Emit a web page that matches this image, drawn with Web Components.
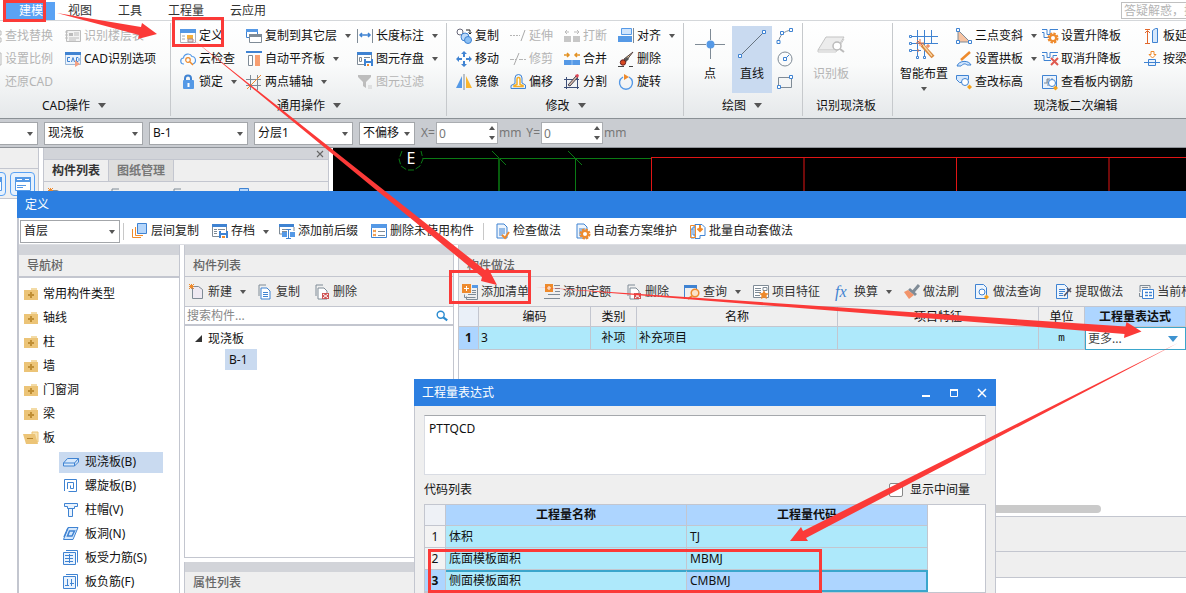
<!DOCTYPE html>
<html lang="zh-CN">
<head>
<meta charset="utf-8">
<title>定义</title>
<style>
html,body{margin:0;height:100%;overflow:hidden;background:#fff}
body{font:12px/16px "Noto Sans","Noto Sans CJK SC",sans-serif;color:#111;
 --line:#c3c6cf;--strip:#d2d4d9;--panel:#efefef;--blue:#2c7fe1;--sel:#c9daf0;--cyan:#aee9fb;--head:#add5ff}
</style>
</head>
<body>
<app-shell></app-shell>
<script>
const B='#3f83d2',L='#5599e6',O='#ee8a2c',G='#7f8b96',Y='#ecc477';
const folder=`<path d="M8 2h6v2H8z" fill="#f3dba6"/><path d="M1 4h14v10H1z" fill="${Y}"/>`;
const doc=`<path d="M3 1h7l3 3v11H3z" fill="#eef5fd" stroke="${B}"/><path d="M5 6h6M5 8h6M5 10h6M5 12h4" stroke="${B}"/>`;
const copyDoc=c=>`<path d="M2 12V1h7" fill="none" stroke="${G}"/><path d="M4 4h6l3 3v8H4z" fill="#fff" stroke="${c}"/>`;
const gear=(x,y)=>`<circle cx="${x}" cy="${y}" r="4.5" fill="none" stroke="${O}" stroke-width="2" stroke-dasharray="2.4 1.1"/><circle cx="${x}" cy="${y}" r="3" fill="#fff" stroke="${O}" stroke-width="2"/>`;
const node=(x,y)=>`<path d="M${x-1.5} ${y-1.5}h3v3h-3z" fill="#fff" stroke="${B}"/>`;
const ICONS={
find:`<path d="M2 3h13v4H2zM2 10h13v4H2z" fill="none" stroke="#b9b9b9"/>`,
scale:`<path d="M2 2h13v12H2z" fill="none" stroke="#b9b9b9"/>`,
restore:`<path d="M9 2l-6 6 6 6" fill="none" stroke="#c4c4c4"/>`,
floors:`<path d="M1.500 2.500h14v11h-14z" fill="#f3f3f3" stroke="#bdbdbd"/><path d="M0 4h3M0 7h3M0 10h3" stroke="#bdbdbd"/><path d="M4 5h4v3H4z" fill="#bbb"/><path d="M9 5h5M9 7h5M4 10h10M4 12h7" stroke="#bbb"/>`,
cad:`<path d="M.5 1.500h15v12H.5z" fill="#eaf3fd" stroke="#9bb8d8"/><path d="M0 1h16v3H0z" fill="${B}"/><path d="M5 6.500H2.500v4H5M6.500 11L8 6.500 9.500 11M11.500 6.500v4H13l1-1v-2l-1-1z" fill="none" stroke="${B}"/><path d="M10 9l5 4-5 3z" fill="#f3a184"/>`,
define:`<path d="M.5 1.500h15v13H.5z" fill="#fff" stroke="#aab4bf"/><path d="M0 1h16v4H0z" fill="${L}"/><path d="M2 8h3M2 11h3" stroke="#aaa"/><path d="M7 7h6v4H7z" fill="#f7b13c"/><path d="M8 11h5v3H8z" fill="#ddd" stroke="#a88"/>`,
cloud:`<path d="M4 13a3 3 0 0 1-.5-6A4.500 4.500 0 0 1 12 5.500 3.800 3.800 0 0 1 12.500 13" fill="none" stroke="${L}" stroke-width="1.200"/><circle cx="8" cy="9" r="2.300" fill="none" stroke="${O}" stroke-width="1.200"/><path d="M10 11l3 3" stroke="${O}" stroke-width="1.500"/>`,
lock:`<path d="M5 7V4.500a3 3 0 0 1 6 0V7" fill="none" stroke="${B}" stroke-width="2"/><rect x="3" y="6" width="11" height="9" rx="1" fill="${L}"/><path d="M8.500 9v4" stroke="#fff" stroke-width="2"/>`,
copyfloor:`<path d="M.5 1.500h11v8H.5z" fill="#fff" stroke="${B}"/><path d="M0 1h12v3H0z" fill="${L}"/><path d="M3.500 6.500h12v8h-12z" fill="#fff" stroke="${G}"/><path d="M3 6h13v3H3z" fill="${G}"/>`,
align:`<path d="M0 1h16" stroke="${B}" stroke-width="2"/><path d="M2.500 4.500h4v10h-4z" fill="#fff" stroke="${G}"/><path d="M9 4h5v11H9z" fill="#f79e71"/>`,
axis:`<path d="M0 5.500h15M0 11.500h15M4.500 1v15M11.500 1v15" stroke="${G}"/><path d="M1 15L15 1" stroke="${O}"/>`,
length:`<path d="M.5 1v14M15.500 1v14" stroke="${G}"/><path d="M3 7h10M5 5L3 7l2 2M11 5l2 2-2 2" fill="none" stroke="${B}" stroke-width="1.500"/>`,
save:`<path d="M.5 1.500h14v12H.5z" fill="#fff" stroke="${G}"/><path d="M0 1h15v3H0z" fill="${B}"/><path d="M2.500 6.500h2v4h-2zM7 6.500h6" fill="none" stroke="${G}"/><path d="M7 8h9v7H7z" fill="${B}"/><path d="M9 8h5v2H9z" fill="#fff"/><path d="M9 12h5v3H9z" fill="#fff"/><path d="M10 13h2v2h-2z" fill="${O}"/>`,
archive:`<path d="M.5 1.500h14v12H.5z" fill="#fff" stroke="${G}"/><path d="M0 1h15v3H0z" fill="${B}"/><path d="M2 6.500h3M6 6.500h7M2 8.500h3M2 10.500h3" fill="none" stroke="${G}"/><path d="M7 8h9v7H7z" fill="${B}"/><path d="M9 8h5v2H9z" fill="#fff"/><path d="M9 12h5v3H9z" fill="#fff"/><path d="M10 13h3v2h-3z" fill="${O}"/>`,
funnel:`<path d="M1 1h13v2L9 8v6l-3-2V8L1 3z" fill="#bdbdbd"/><path d="M11 12h4M11 14h4" stroke="#ccc"/>`,
copy:`<circle cx="4" cy="4" r="3" fill="#fff" stroke="#667"/><circle cx="9" cy="9" r="4" fill="#bcd9f8" stroke="${B}"/><circle cx="12" cy="12" r="3.500" fill="#8cc0f4" stroke="${B}"/><path d="M10 2h4v4M12.500 4.500L14 6l1.500-1.500" fill="none" stroke="#222"/>`,
move:`<path d="M8 0l3 3H5zM8 16l3-3H5zM0 8l3-3v6zM16 8l-3-3v6z" fill="${B}"/><path d="M8 3v3M8 10v3M3 8h3M10 8h3" stroke="${B}" stroke-width="2"/>`,
mirror:`<path d="M6 2v12H0z" fill="${L}"/><path d="M10 2v12h6z" fill="#fbb62c"/><path d="M8 0v16" stroke="${G}"/>`,
extend:`<path d="M0 7.500h10" stroke="#b5b5b5" stroke-dasharray="2 1"/><path d="M15 2l-4 11" stroke="#aaa"/>`,
trim:`<path d="M0 8.500h6M9 8.500h7" stroke="#b5b5b5" stroke-dasharray="4 1"/><path d="M9 2L4 14" stroke="#aaa"/>`,
offset:`<path d="M1 14.500v-3l4-2V4a3.500 3.500 0 0 1 7 0v5l3.500 2v3.500z" fill="#e8f2fe" stroke="${B}"/><path d="M4 12.500v-1l3-1V5a1.500 1.500 0 0 1 3 0v5.500l3 1v1z" fill="#fff" stroke="#f5ae25" stroke-width="1.500"/>`,
brk:`<path d="M0 8h7v6H0zM9 8h7v6H9z" fill="#c7c7c7"/><path d="M1 4h4M3 2L1 4l2 2M10 4h4M13 2l2 2-2 2" fill="none" stroke="#bbb"/>`,
merge:`<path d="M0 9h16v5H0z" fill="${L}"/><path d="M8 9v5" stroke="#9cc6f5"/><path d="M0 4h5M3 2l2 2-2 2M16 4h-5M13 2l-2 2 2 2" fill="none" stroke="#e39224" stroke-width="1.500"/>`,
split:`<path d="M0 5.500h15M0 13.500h15M2.500 3v12M13.500 3v12" stroke="#3d4f78"/><path d="M4 11L12 2l2 1-8 9z" fill="#d8b9a6" stroke="#445"/><path d="M11 1l3-1 1 2-2 2z" fill="#d45"/>`,
alignr:`<path d="M3.500.5h10v6h-10z" fill="#cfe4fc" stroke="${L}"/><path d="M0 8h14v6H0z" fill="${L}"/><path d="M15.500 0v15" stroke="${G}"/>`,
brush:`<path d="M15 1L8 10 6 8z" fill="#e7cfa0" stroke="#544"/><path d="M9 6l2 2-4 4-3-2z" fill="#555"/><circle cx="5" cy="11.500" r="2.700" fill="#d9481f" stroke="#622"/><path d="M0 15.500h6M11 15.500h4" stroke="#444"/>`,
rotate:`<path d="M5 3a6.500 6.500 0 1 0 6 0" fill="none" stroke="${L}" stroke-width="1.400"/><path d="M6 0l5 3-5 3z" fill="${O}"/>`,
point:['0 0 30 30',`<path d="M0 15.500h11M19 15.500h11M15.500 0v11M15.500 19v11" stroke="${G}"/><circle cx="15.500" cy="15.500" r="4" fill="${L}"/>`],
line:['0 0 30 30',`<path d="M3 27L27 3" stroke="#667380"/><path d="M1.500 25.500h3v3h-3zM25.500 1.500h3v3h-3z" fill="#fff" stroke="${B}"/>`],
arc:`<path d="M1.500 13.500C3 7 7 3 14.500 2" fill="none" stroke="${G}"/>${node(1.5,14)}${node(5,5)}${node(14,2)}`,
circ:`<circle cx="8" cy="8" r="7" fill="none" stroke="${G}"/><path d="M8 8l4-4" stroke="${B}"/>${node(8,8)}`,
rect:`<path d="M1.500 3.500h13v10h-13z" fill="none" stroke="${G}"/>${node(2,13)}${node(14,3)}`,
slab:['0 0 30 30',`<path d="M10 8h18l-8 13H2z" fill="#ececec" stroke="#c3c3c3"/><path d="M2 21v2h18l8-13" fill="none" stroke="#c9c9c9"/><circle cx="21" cy="17" r="4" fill="#fff" stroke="#bbb" stroke-width="1.500"/><path d="M24 20l4 3" stroke="#bbb" stroke-width="2"/>`],
smart:['0 0 30 30',`<path d="M2 7.500h27M2 14.500h27M2 21.500h10M8.500 1v27M15.500 1v27M22.500 1v14" stroke="${B}"/><path d="M.5 6.500h2v2h-2zM.5 13.500h2v2h-2zM.5 20.500h2v2h-2zM7.500 27.500h2v2h-2zM14.500 27.500h2v2h-2z" fill="#fff" stroke="${B}"/><path d="M13 16l11 12" stroke="#d8893f" stroke-width="4"/><path d="M14 16l9 11" stroke="#fbd9a9" stroke-width="1.200"/><path d="M11 10v7M7 14h8M8 11l6 6M19 15v4M17 17h4M9 20v3" stroke="#e8703a"/>`],
slope:`<path d="M2 2v12h12z" fill="#f7c4a3" stroke="${G}"/>${node(2,2)}${node(2,14)}${node(14,14)}`,
arch:`<path d="M1 15c2-6 12-6 14-1h-4c-2-2-4-1-6 1z" fill="#cfe4fc" stroke="${B}"/><path d="M14 1L5 9" stroke="${O}" stroke-width="2.500"/>`,
elev:`<path d="M.5 1.500h12v4l-3 3h-6l-3-3z" fill="#d6e8fc" stroke="${B}"/><circle cx="9" cy="8" r="3.500" fill="#fff" stroke="${B}"/><path d="M11 13l2.500-2.500L16 13l-2.500 2.500z" fill="#f5a21b"/>`,
lift:`<path d="M0 1.500h5v5h3v-5h8M0 4.500h2v5h6" fill="none" stroke="${B}"/>${gear(11,10)}`,
unlift:`<path d="M0 1.500h5v5h3v-5h8M0 4.500h2v5h7M11 7V4.500h4" fill="none" stroke="${B}"/><path d="M9 7l7 7M16 7l-7 7" stroke="#df5a50" stroke-width="2"/>`,
viewbar:`<path d="M.5 1.500h14v13H.5z" fill="#eaf3fd" stroke="${B}"/><path d="M2 9h3V5h3M6 12V5M10 4v3" fill="none" stroke="${G}"/><circle cx="10" cy="9" r="3.500" fill="#fff" stroke="${B}"/><path d="M11 14l2.500-2.500L16 14l-2.500 2.500z" fill="#f5a21b"/>`,
extslab:`<path d="M3.500 15V3M1 5l2.500-2.500L6 5M1 15.500h5M1 1.500h5" fill="none" stroke="#e2672b"/><path d="M8.500 2.500l3-2h2v14h-5z" fill="#d6e8fc" stroke="${B}"/>`,
bybeam:`<path d="M0 11.500h16M4.500 8.500h7v6h-7z" fill="#eaf3fd" stroke="${B}"/><path d="M7 .5h3v3h2L8.500 7 5 3.500h2z" fill="#fff" stroke="${O}"/>`,
floorcopy:`<path d="M5.500.5h9v10h-9z" fill="#b5d6fb" stroke="${B}"/><path d="M3.500 4v8.500H11M.5 6v8.500H9" fill="none" stroke="${O}"/>`,
prefix:`<path d="M0 1h15v3H0z" fill="${B}"/><path d="M.5 4v7h4M15 4v4M3 6.500h9M3 8.500h5" fill="none" stroke="${G}"/><path d="M3 9h5v5H3zM11 9h5v5h-5z" fill="${L}"/><path d="M7 6.500h5M9.500 6v10M7 15.500h5" stroke="${B}"/>`,
unused:`<path d="M.5 2.500h15v12H.5z" fill="#fff" stroke="${B}"/><path d="M0 1h16v4H0z" fill="${L}"/><path d="M2 7l3 2M5 7L2 9M2 11l3 2M5 11l-3 2" stroke="${O}"/><path d="M7 8.500h7M7 12.500h7" stroke="${G}"/>`,
check:doc+`<path d="M8 12l3 3 4-6" fill="none" stroke="${O}" stroke-width="2"/>`,
auto:doc+gear(11,11),
batch:`<path d="M5 1.500h7l3 3v8h-5v3H5zM5 4H3v8h2M3 6H1v9h3" fill="#fff" stroke="${B}"/><path d="M.5 2.500h5v12h-5z" fill="none" stroke="${O}"/><path d="M10 2v6M7.500 5.500L10 8l2.500-2.500" fill="none" stroke="${O}" stroke-width="2"/>`,
newdoc:`<path d="M3.500 2.500h6l4 3v9h-10z" fill="#eee9f2" stroke="${G}"/><path d="M0 0l5 5M5 0L0 5M2.500 0v5M0 2.500h5" stroke="${O}"/>`,
copydoc:copyDoc(B)+`<path d="M6 8.500h5M6 10.500h5M6 12.500h5" stroke="${B}"/>`,
deldoc:copyDoc(G)+`<path d="M8 9h7v6H8z" fill="#cf5454"/><path d="M9 10l5 4M14 10l-5 4" stroke="#fff"/>`,
addlist:`<path d="M0 0h9v9H0z" fill="${O}"/><path d="M2 4.500h5M4.500 2v5" stroke="#fff"/><path d="M10 1h6v3h-6z" fill="${L}"/><path d="M15.500 4v11.500h-11v-3M13.500 13.500h-11v-3M10 6.500h4M10 8.500h4M6 10.500h8" fill="none" stroke="${G}"/>`,
addquota:`<path d="M1 0h8v8H1z" fill="${O}"/><path d="M3 4h4M5 2v4" stroke="#fff"/><path d="M10 1.500h6M11 4.500h5M11 7.500h5M4 10.500h12M0 14.500h16" stroke="${G}"/>`,
query:`<path d="M.5 15V1.500h12V6" fill="none" stroke="${B}"/><path d="M0 1h13v3H0z" fill="${B}"/><circle cx="11" cy="9" r="3.800" fill="#fbe3c9" stroke="${O}" stroke-width="1.500"/><path d="M8 12l-4 3" stroke="${O}" stroke-width="2"/>`,
feature:`<path d="M.5 1.500h15v12H.5z" fill="#fff" stroke="${G}"/><path d="M2 4.500h6M2 6.500h6M2 8.500h6M2 11.500h5M10 3.500h4v3h-4z" fill="none" stroke="${G}"/><path d="M11 6l1.500 3 3.500.5-2.500 2 .5 3.500-3-1.500L8 15l.5-3.500L6 9.500 9.500 9z" fill="${O}"/>`,
fx:`<text x="0" y="13" font-family="Liberation Serif,serif" font-style="italic" font-size="16" fill="${B}">fx</text>`,
painter:`<path d="M15 1l-6 7" stroke="${G}" stroke-width="3"/><path d="M6 4l7 6-2 2-7-6z" fill="${G}"/><path d="M4 6l6 5-5 4-5-7z" fill="#f2946a"/>`,
methodq:`<path d="M1.500.5h8l3 3v11h-11z" fill="#eef5fd" stroke="${B}"/><circle cx="8" cy="8" r="3" fill="#fff" stroke="${B}"/><path d="M10 13l2.500-2.500L15 13l-2.500 2.500z" fill="#f5a21b"/>`,
extract:`<path d="M.5.5h8l3 3v11H.5z" fill="#eef5fd" stroke="${B}"/><path d="M3 5.500h6M3 7.500h6M3 9.500h4M3 11.500h4" stroke="${B}"/><path d="M15 4l-7 8M11 4l4 4" stroke="#556" stroke-width="1.600"/>`,
current:`<path d="M2 8V1.500h10v3M4 3.500h6M1.500 9v3.500h3" fill="none" stroke="${G}"/><path d="M4.500 5.500h11v9h-11z" fill="#fff" stroke="${B}"/><path d="M7 8.500h3M11 8.500h3M7 11.500h3M11 11.500h3" stroke="${B}" stroke-width="1.500"/>`,
fplus:folder+`<path d="M8 6v6M5 9h6" stroke="#c08f35" stroke-width="2"/>`,
fminus:`<path d="M9 2h6v10H9z" fill="#f7e2b2" stroke="${Y}"/><path d="M0 4h12l3 10H3z" fill="${Y}"/><path d="M4 8.500h6" stroke="#b8862f"/>`,
s1:`<path d="M.5 9l4-4.500h11l-4 4.500zM.5 9v3h11V9M11.500 12l4-4V4.500" fill="#d6e8fc" stroke="${B}"/>`,
s2:`<path d="M1.500 13V1.500h12v12h-8M4.500 11V4.500h6v6h-3v-3" fill="none" stroke="${B}"/>`,
s3:`<path d="M1.500 1.500h13v3h-3v2h-7v-2h-3zM5.500 6.500v8h4v-8" fill="#eaf3fd" stroke="${B}"/>`,
s4:`<path d="M5 1.500h10l-5 12H.5z" fill="#d6e8fc" stroke="${B}"/><path d="M6.500 5h5l-2.500 5H4.500zM5 2L1 11" fill="none" stroke="${B}" stroke-width="1.500"/>`,
s5:`<path d="M3 .5h11.500v12" fill="none" stroke="${B}"/><path d="M.5 2.500h12v12H.5z" fill="#eaf3fd" stroke="${B}"/><path d="M2 5.500h8M2 8.500h8M2 11.500h8M6.500 4v9" stroke="${B}"/>`,
s6:`<path d="M3 .5h11.500v12" fill="none" stroke="${B}"/><path d="M.5 2.500h12v12H.5z" fill="#eaf3fd" stroke="${B}"/><path d="M2 11.500h4M7 9.500h4M4.500 5v7M8.500 5v7" stroke="${B}"/>`,
search:`<circle cx="6.500" cy="6.500" r="4" fill="none" stroke="#2a8bd0" stroke-width="1.600"/><path d="M9.500 9.500L14 13" stroke="#2a8bd0" stroke-width="2.400"/>`,
card:`<path d="M.5 1.500h15v13H.5z" fill="#fff" stroke="${L}"/><path d="M0 1h16v5H0z" fill="${L}"/><path d="M2 3.500h5M10 3.500h4" stroke="#fff"/><path d="M2 9.500h9M2 11.500h6" stroke="${L}"/>`,
min:`<path d="M4 11h8" stroke="#fff" stroke-width="2"/>`,
max:`<path d="M4.500 5h7v6.500h-7z" fill="none" stroke="#fff"/><path d="M4 5h8" stroke="#fff" stroke-width="2"/>`,
close:`<path d="M4 4l8 8M12 4l-8 8" stroke="currentColor" stroke-width="1.500"/>`
};
/* Base: fills an open shadow root from the class's own css and view(). */
class View extends HTMLElement{
 static css='';
 connectedCallback(){
  if(this.shadowRoot)return;
  const t=document.createElement('template');
  t.innerHTML=`<style>*{box-sizing:border-box}:host{display:block;box-sizing:border-box}button,input,select,textarea{font:inherit;color:inherit;margin:0}button{background:none;border:0;padding:0;cursor:default;white-space:nowrap}${this.constructor.css}</style>${this.view()}`;
  this.attachShadow({mode:'open'}).append(t.content.cloneNode(true));
 }
 a(n,d=''){return this.getAttribute(n)??d}
 view(){return '<slot></slot>'}
}
const def=(n,c)=>customElements.define(n,c);

def('app-icon',class extends View{
 static css=':host{flex:none;width:16px;height:16px}:host([big]){width:30px;height:30px}svg{display:block;width:100%;height:100%;overflow:visible}';
 view(){const i=ICONS[this.a('name')];const[v,p]=Array.isArray(i)?i:['0 0 16 16',i];return `<svg viewBox="${v}" aria-hidden="true">${p}</svg>`}
});
def('tool-button',class extends View{
 static css=`:host([off]){color:#b4b4b4}button{display:flex;align-items:center;gap:3px;height:23px}
 i{flex:none;border:3px solid transparent;border-top:4px solid #555;border-bottom:0;margin:1px -3px 0 5px}
 :host([wide]) button{padding:0 var(--pad,7px);height:26px}
 :host([big]) button{flex-direction:column;gap:7px;height:67px;padding:3px 5px 0}
 :host([big]) i{margin:-2px 0 0}
 :host([pressed]) button{background:var(--sel)}`;
 view(){return `<button type="button" ${this.hasAttribute('off')?'aria-disabled="true"':''} ${this.hasAttribute('tip')?`aria-label="${this.a('tip')}"`:''}>${this.a('icon')?`<app-icon name="${this.a('icon')}" ${this.hasAttribute('big')?'big':''}></app-icon>`:''}<slot></slot>${this.hasAttribute('menu')?'<i></i>':''}</button>`}
});
def('ribbon-group',class extends View{
 static css=`:host{flex:none;display:flex;flex-direction:column;padding:3px 0 0 9px;position:relative}
 :host::after{content:"";position:absolute;right:0;top:2px;bottom:2px;width:1px;background:#c6c9cc}
 .tools{display:grid;grid-auto-flow:column;grid-template-rows:repeat(3,23px);grid-template-columns:var(--cols)}
 ::slotted([big]){grid-row:1/4;margin-top:2px}
 footer{display:flex;justify-content:center;align-items:center;height:26px;margin-left:-9px}
 footer i{border:4px solid transparent;border-top:5px solid #555;border-bottom:0;margin-left:8px}`;
 view(){return `<div class="tools"><slot></slot></div><footer>${this.a('label')}${this.hasAttribute('menu')?'<i></i>':''}</footer>`}
});
const tb=(icon,text,attrs='')=>`<tool-button icon="${icon}" ${attrs}>${text}</tool-button>`;
def('app-ribbon',class extends View{
 static css=`:host{overflow:hidden;height:98px;border-bottom:1px solid #8a9095;background:linear-gradient(#fff,#fafbfb 45%,#e5e8ea)}
 .row{display:flex;margin-left:-23px;height:97px}
 .g1{width:194px;--cols:79px auto}.g2{width:276px;--cols:66px 111px auto}.g3{width:237px;--cols:54px 54px 54px auto}
 .g4{width:119px;--cols:42px 45px auto}.g5{width:90px;--cols:auto}.g6{width:372px;--cols:61px 86px 102px auto}
 .g4 [big],.g5 [big],.g6 [big]{justify-self:start}.g4{padding-left:6px}.g5{padding-left:5px}.g6{padding-left:2px}`;
 view(){return `<div class="row">
<ribbon-group class="g1" label="CAD操作" menu>${tb('find','查找替换','off')}${tb('scale','设置比例','off')}${tb('restore','还原CAD','off')}${tb('floors','识别楼层表','off')}${tb('cad','CAD识别选项')}</ribbon-group>
<ribbon-group class="g2" label="通用操作" menu>${tb('define','定义')}${tb('cloud','云检查')}${tb('lock','锁定','menu')}${tb('copyfloor','复制到其它层','menu')}${tb('align','自动平齐板','menu')}${tb('axis','两点辅轴','menu')}${tb('length','长度标注','menu')}${tb('save','图元存盘','menu')}${tb('funnel','图元过滤','off')}</ribbon-group>
<ribbon-group class="g3" label="修改" menu>${tb('copy','复制')}${tb('move','移动')}${tb('mirror','镜像')}${tb('extend','延伸','off')}${tb('trim','修剪','off')}${tb('offset','偏移')}${tb('brk','打断','off')}${tb('merge','合并')}${tb('split','分割')}${tb('alignr','对齐','menu')}${tb('brush','删除')}${tb('rotate','旋转')}</ribbon-group>
<ribbon-group class="g4" label="绘图" menu>${tb('point','点','big')}${tb('line','直线','big pressed')}${tb('arc','','tip="圆弧"')}${tb('circ','','tip="圆"')}${tb('rect','','tip="矩形"')}</ribbon-group>
<ribbon-group class="g5" label="识别现浇板">${tb('slab','识别板','big off')}</ribbon-group>
<ribbon-group class="g6" label="现浇板二次编辑">${tb('smart','智能布置','big menu')}${tb('slope','三点变斜','menu')}${tb('arch','设置拱板','menu')}${tb('elev','查改标高')}${tb('lift','设置升降板')}${tb('unlift','取消升降板')}${tb('viewbar','查看板内钢筋')}${tb('extslab','板延')}${tb('bybeam','按梁')}</ribbon-group></div>`}
});
def('app-tabs',class extends View{
 static css=`:host{display:flex;height:21px;border-bottom:1px solid #d4d7da;background:#fff;color:#333}
 nav{display:flex;margin-left:4px;padding-top:2px}nav button{padding:0 13px;height:18px}
 nav button.on{background:#5aa2f4;color:#fff;padding:0 12px 0 15px}
 input{margin:2px 0 0 auto;width:65px;height:17px;border:1px solid #c0c0c0;border-right:0;padding:0 0 0 2px;background:#fff;outline:0}input::placeholder{color:#b4b4b4;opacity:1}`;
 view(){return `<nav><button class="on">建模</button><button>视图</button><button>工具</button><button>工程量</button><button>云应用</button></nav><input type="text" aria-label="搜索" placeholder="答疑解惑，搜">`}
});
def('combo-box',class extends View{
 static css=`:host{position:relative;flex:none;background:#fff;border:1px solid #a3a6aa;height:23px}
 select{appearance:none;width:100%;height:100%;border:0;background:none;padding:0 0 0 3px;outline:0;display:block}
 i{position:absolute;right:4px;top:9px;border:3px solid transparent;border-top:4px solid #555;border-bottom:0;pointer-events:none}`;
 view(){return `<select aria-label="${this.a('label')}"><option>${this.a('value')}</option></select><i></i>`}
});
def('spin-box',class extends View{
 static css=`:host{display:flex;align-items:center;color:#777}div{position:relative;width:62px;height:22px;margin:0 1px}
 input{appearance:textfield;width:100%;height:100%;border:1px solid #aaadb1;padding:0 2px;background:#fff;outline:0;display:block}
 input::-webkit-inner-spin-button{display:none}
 svg{position:absolute;right:3px;top:4px}`;
 view(){return `<label for="n">${this.a('label')}=</label><div><input id="n" type="number" value="0"><svg width="6" height="14"><path d="M3 0l3 4H0zM3 14l3-4H0z" fill="#555"/></svg></div>mm`}
});
def('option-bar',class extends View{
 static css=`:host{display:flex;align-items:center;gap:6px;height:29px;background:#c9ccd1;border-bottom:1px solid #8f9399}
 .a{width:38px;border-left:0}.b{width:99px}.c{width:56px}spin-box+spin-box{margin-left:-1px}`;
 view(){return `<combo-box class="a" label="楼层" value=""></combo-box><combo-box class="b" label="类型" value="现浇板"></combo-box><combo-box class="b" label="构件" value="B-1"></combo-box><combo-box class="b" label="分层" value="分层1"></combo-box><combo-box class="c" label="偏移" value="不偏移"></combo-box><spin-box label="X"></spin-box><spin-box label="Y"></spin-box>`}
});
def('work-area',class extends View{
 static css=`:host{flex:1;display:flex;min-height:0;background:#fff}
 .side{width:39px;height:51px;background:var(--panel);border-right:1px solid var(--line);border-bottom:1px solid var(--line);overflow:hidden}
 .side div{height:21px;border-bottom:1px solid var(--line)}
 .side p{margin:3px 0 0 -19px;display:flex;gap:4px}
 .side button{flex:none;width:25px;height:24px;border:1px solid #5aa2f4;border-radius:4px;background:#e6f1fd;padding:3px 4px}
 .list{width:286px;margin-left:4px;background:var(--panel);border:solid var(--line);border-width:0 1px}
 .bar{height:12px;background:var(--strip);border-bottom:1px solid var(--line);display:flex;justify-content:flex-end;color:#666}
 .bar app-icon{width:12px;height:12px;margin-right:2px}
 .tabs{display:flex;height:22px;border-bottom:1px solid var(--line)}
 .tabs button{width:65px;border-right:1px solid var(--line);color:#777;background:#dedede;font-weight:bold}.tabs .on{background:var(--panel);color:#333}
 .tools{display:flex;padding:6px 4px;gap:46px}
 .cad{flex:1;margin-left:4px;background:#000;overflow:hidden;min-width:0}svg{display:block}`;
 view(){return `<div class="side"><div></div><p><button aria-label="列表"><app-icon name="card"></app-icon></button><button aria-label="属性"><app-icon name="card"></app-icon></button></p></div>
<div class="list"><div class="bar"><app-icon name="close"></app-icon></div><div class="tabs"><button class="on">构件列表</button><button>图纸管理</button></div><div class="tools"><app-icon name="newdoc"></app-icon><app-icon name="copydoc"></app-icon><app-icon name="deldoc"></app-icon><app-icon name="floorcopy"></app-icon></div></div>
<div class="cad"><svg width="1600" height="60" fill="none"><path d="M69 3l-3 8 2 7 6 4h7l6-4 3-7-2-8" stroke="#0a7a14" stroke-dasharray="6 2"/><path d="M90 10.500h229M159 3l14 14M235 3l14 14M242.500 10v50" stroke="#0a7a14"/><path d="M166 10v50" stroke="#075c0d" stroke-width="2"/><path d="M318.500 10V60M318 9.500H1600M471 10v50M623.500 10v50M776 10v50M928.500 10v50" stroke="#e01515"/><text x="78" y="16" text-anchor="middle" font-size="16" fill="#fff">E</text></svg></div>`}
});
def('dock-panel',class extends View{
 static css=`:host{display:flex;flex-direction:column;min-width:0;border-left:1px solid var(--line);background:#fff;overflow:hidden}
 .strip{flex:none;height:10px;background:var(--strip)}h2{flex:none;margin:0;font:inherit;font-weight:500;color:#666;height:22px;line-height:22px;padding-left:8px;background:var(--panel);border-bottom:1px solid var(--line)}`;
 view(){return `<div class="strip"></div><h2>${this.a('title-text')}</h2><slot></slot>`}
});
def('nav-tree',class extends View{
 static css=`:host{flex:1;padding-top:4px;border-top:1px solid var(--line)}ul{list-style:none;margin:0;padding:0}
 li{display:flex;align-items:center;gap:4px;height:24px;padding-left:4px}
 .sub{padding-left:40px}.sub span{display:flex;align-items:center;gap:6px;height:21px;padding:0 27px 0 4px}.on span{background:var(--sel)}`;
 view(){const f=['常用构件类型','轴线','柱','墙','门窗洞','梁'],s=['现浇板(B)','螺旋板(B)','柱帽(V)','板洞(N)','板受力筋(S)','板负筋(F)'];
 return `<ul>${f.map(t=>`<li><app-icon name="fplus"></app-icon>${t}</li>`).join('')}<li><app-icon name="fminus"></app-icon>板</li>${s.map((t,i)=>`<li class="sub ${i?'':'on'}"><span><app-icon name="s${i+1}"></app-icon>${t}</span></li>`).join('')}</ul>`}
});
def('component-list',class extends View{
 static css=`:host{flex:1}.tools{display:flex;align-items:center;height:30px;background:var(--panel);border-bottom:1px solid var(--line);margin-left:-3px;color:#333}
 .search{display:flex;align-items:center;height:19px;border-bottom:2px solid var(--line)}
 input{flex:1;min-width:0;border:0;padding:0 0 0 2px;background:none;outline:0}input::placeholder{color:#888;opacity:1}
 .search app-icon{width:14px;height:14px;margin-right:4px}
 .tree{padding-top:2px}.tree div{display:flex;align-items:center;gap:6px;height:21px;padding-left:10px}
 .tree svg{display:block}.tree span{margin-left:30px;height:21px;line-height:21px;padding:0 9px 0 4px;background:var(--sel)}`;
 view(){return `<div class="tools">${tb('newdoc','新建','wide menu')}${tb('copydoc','复制','wide')}${tb('deldoc','删除','wide')}</div>
<div class="search"><input type="text" aria-label="搜索构件" placeholder="搜索构件..."><app-icon name="search"></app-icon></div>
<div class="tree"><div><svg width="7" height="7"><path d="M7 0v7H0z" fill="#333"/></svg>现浇板</div><div><span>B-1</span></div></div>`}
});
def('method-panel',class extends View{
 static css=`:host{flex:1;display:flex;flex-direction:column;min-height:0}.tools{flex:none;display:flex;align-items:center;height:30px;background:var(--panel);border-bottom:1px solid var(--line);margin-left:-4px;gap:1px;color:#333}
 table{flex:none;width:100%;table-layout:fixed;border-collapse:separate;border-spacing:0}
 th,td{padding:0;border:solid var(--line);border-width:0 1px 1px 0;font-weight:normal;overflow:hidden;white-space:nowrap;text-align:center;line-height:16px}
 thead th{height:20px;background:var(--panel)}thead th:first-child{background:#eaf0f8}
 tbody th{height:23px;background:var(--head);font-weight:bold}td{background:var(--cyan);padding:0 2px}.l{text-align:left}
 thead .on{background:var(--head);font-weight:bold}.m{font-family:"Liberation Mono",monospace;font-size:11px}
 .edit{background:#fff;border:1px solid #3aa6cc;text-align:left}.edit div{display:flex;justify-content:space-between;align-items:center;padding-right:5px;color:#444}
 .edit i{border:5px solid transparent;border-top:6px solid #3e93d0;border-bottom:0}
 .bar{margin-top:auto;padding-bottom:3px}.bar i{display:block;height:8px;border-radius:4px;background:#cacaca;margin-right:85px}
 .b1,.b2{flex:none;background:var(--panel);border-top:1px solid var(--line);height:35px}.b2{height:27px;border-bottom:1px solid var(--line);margin-bottom:15px}`;
 view(){return `<div class="tools">${tb('addlist','添加清单','wide')}${tb('addquota','添加定额','wide')}${tb('deldoc','删除','wide')}${tb('query','查询','wide menu')}${tb('feature','项目特征','wide')}${tb('fx','换算','wide menu')}${tb('painter','做法刷','wide')}${tb('methodq','做法查询','wide')}${tb('extract','提取做法','wide')}${tb('current','当前构','wide')}</div>
<table><colgroup><col style="width:20px"><col style="width:112px"><col style="width:46px"><col style="width:201px"><col><col style="width:46px"><col style="width:101px"></colgroup>
<thead><tr><th></th><th>编码</th><th>类别</th><th>名称</th><th>项目特征</th><th>单位</th><th class="on">工程量表达式</th></tr></thead>
<tbody><tr><th>1</th><td class="l">3</td><td>补项</td><td class="l">补充项目</td><td></td><td class="m">m</td><td class="edit"><div>更多...<i></i></div></td></tr></tbody></table>
<div class="bar"><i></i></div><div class="b1"></div><div class="b2"></div>`}
});
def('title-bar',class extends View{
 static css=`:host{display:flex;align-items:center;height:27px;background:var(--blue);color:#fff;padding-left:8px}div{margin-left:auto;display:flex;gap:12px;padding-right:6px}button{width:16px;height:16px}`;
 view(){return `<slot></slot>${this.hasAttribute('controls')?`<div><button aria-label="最小化"><app-icon name="min"></app-icon></button><button aria-label="最大化"><app-icon name="max"></app-icon></button><button aria-label="关闭"><app-icon name="close"></app-icon></button></div>`:''}`}
});
def('define-window',class extends View{
 static css=`:host{position:absolute;left:17px;top:191px;right:0;bottom:0;display:flex;flex-direction:column;background:#fff}
 .in{flex:1;display:flex;flex-direction:column;min-height:0;border-left:2px solid var(--line)}
 .tools{flex:none;display:flex;align-items:center;gap:1px;height:27px;padding-left:1px;border-bottom:1px solid #dcdee3;color:#222;--pad:6px}
 .tools combo-box{width:100px;margin-right:1px}.sep{width:1px;height:17px;background:#c8c8c8;margin:0 1px}.sep.far{margin:0 3px 0 2px}
 main{flex:1;min-height:0;display:grid;grid-template-columns:161px 270px minmax(0,1fr);gap:4px}
 .nav{border-left:0;border-right:1px solid var(--line)}.mid{display:flex;flex-direction:column;gap:4px;min-height:0}
 .list{flex:1;border-bottom:1px solid var(--line);border-right:1px solid var(--line)}.prop{flex:none;height:31px}`;
 view(){return `<title-bar>定义</title-bar><div class="in"><div class="tools"><combo-box label="楼层" value="首层"></combo-box><span class="sep"></span>${tb('floorcopy','层间复制','wide')}${tb('archive','存档','wide menu')}${tb('prefix','添加前后缀','wide')}${tb('unused','删除未使用构件','wide')}<span class="sep far"></span>${tb('check','检查做法','wide')}${tb('auto','自动套方案维护','wide')}${tb('batch','批量自动套做法','wide')}</div>
<main><dock-panel class="nav" title-text="导航树"><nav-tree></nav-tree></dock-panel><div class="mid"><dock-panel class="list" title-text="构件列表"><component-list></component-list></dock-panel><dock-panel class="prop" title-text="属性列表"></dock-panel></div><dock-panel title-text="构件做法"><method-panel></method-panel></dock-panel></main></div>`}
});
def('expression-dialog',class extends View{
 static css=`:host{position:absolute;left:414px;top:379px;width:582px;background:var(--panel)}
 .in{padding:9px 9px 20px;border:1px solid var(--line);border-top:0}
 textarea{display:block;width:100%;height:60px;resize:none;border:1px solid #d9dce3;border-top-color:#a5a8ac;background:#fff;padding:5px 4px;outline:0;line-height:16px}
 .row{display:flex;justify-content:space-between;align-items:center;height:29px;padding-right:16px}
 .row label{display:flex;align-items:center;gap:7px}input{appearance:none;width:14px;height:14px;border:1px solid #888;border-radius:2px;background:#fff}
 .box{background:#fff;border:1px solid var(--line)}
 table{width:503px;table-layout:fixed;border-collapse:separate;border-spacing:0}
 th,td{padding:0;height:22px;border:solid var(--line);border-width:0 1px 1px 0;font-weight:normal;line-height:16px}
 thead th{height:21px;background:var(--head);font-weight:bold}thead th:first-child{background:#eef1f6}
 td{background:var(--cyan);padding-left:3px;text-align:left}tbody th{background:#f3f3f3}
 .on th{background:var(--head);font-weight:bold}.on td{border-top:2px solid #3aa6cc;border-bottom:2px solid #3aa6cc}.on td:last-child{background:var(--head);border-right:2px solid #3aa6cc}`;
 view(){const r=[['体积','TJ'],['底面模板面积','MBMJ'],['侧面模板面积','CMBMJ']];
 return `<title-bar controls>工程量表达式</title-bar><div class="in"><textarea aria-label="表达式">PTTQCD</textarea><div class="row"><span>代码列表</span><label><input type="checkbox">显示中间量</label></div>
<div class="box"><table><colgroup><col style="width:21px"><col><col></colgroup><thead><tr><th></th><th>工程量名称</th><th>工程量代码</th></tr></thead><tbody>${r.map((x,i)=>`<tr class="${i==2?'on':''}"><th>${i+1}</th><td>${x[0]}</td><td>${x[1]}</td></tr>`).join('')}</tbody></table></div></div>`}
});
def('mark-layer',class extends View{
 static css=':host{position:absolute;inset:0;pointer-events:none;overflow:hidden}svg{display:block}';
 view(){return `<svg width="1186" height="593" fill="#fb3a38"><g fill="none" stroke="#fb3a38" stroke-width="3"><path d="M4.500 1.500h40v19h-40zM173.500 18.500h49v27h-49zM450.500 271.500h79v31h-79zM429.500 550.500h391v41h-391z"/></g>
<path d="M57 13l84 14 1-4 15 11-19 5 1-4z"/><path d="M190 37L485 270l3-2 9 17-16-4 1-4z"/><path d="M535 287l590.500 39.500 1-4.500 15 9.500-17.500 6.500.5-4z"/><path d="M1178 343L806 538l2 3-18 0 11-14 2 4z"/></svg>`}
});
def('app-shell',class extends View{
 static css=':host{position:relative;display:flex;flex-direction:column;height:100vh;overflow:hidden}app-tabs,app-ribbon,option-bar{flex:none}';
 view(){return '<app-tabs></app-tabs><app-ribbon></app-ribbon><option-bar></option-bar><work-area></work-area><define-window></define-window><expression-dialog></expression-dialog><mark-layer></mark-layer>'}
});
</script>
</body>
</html>
